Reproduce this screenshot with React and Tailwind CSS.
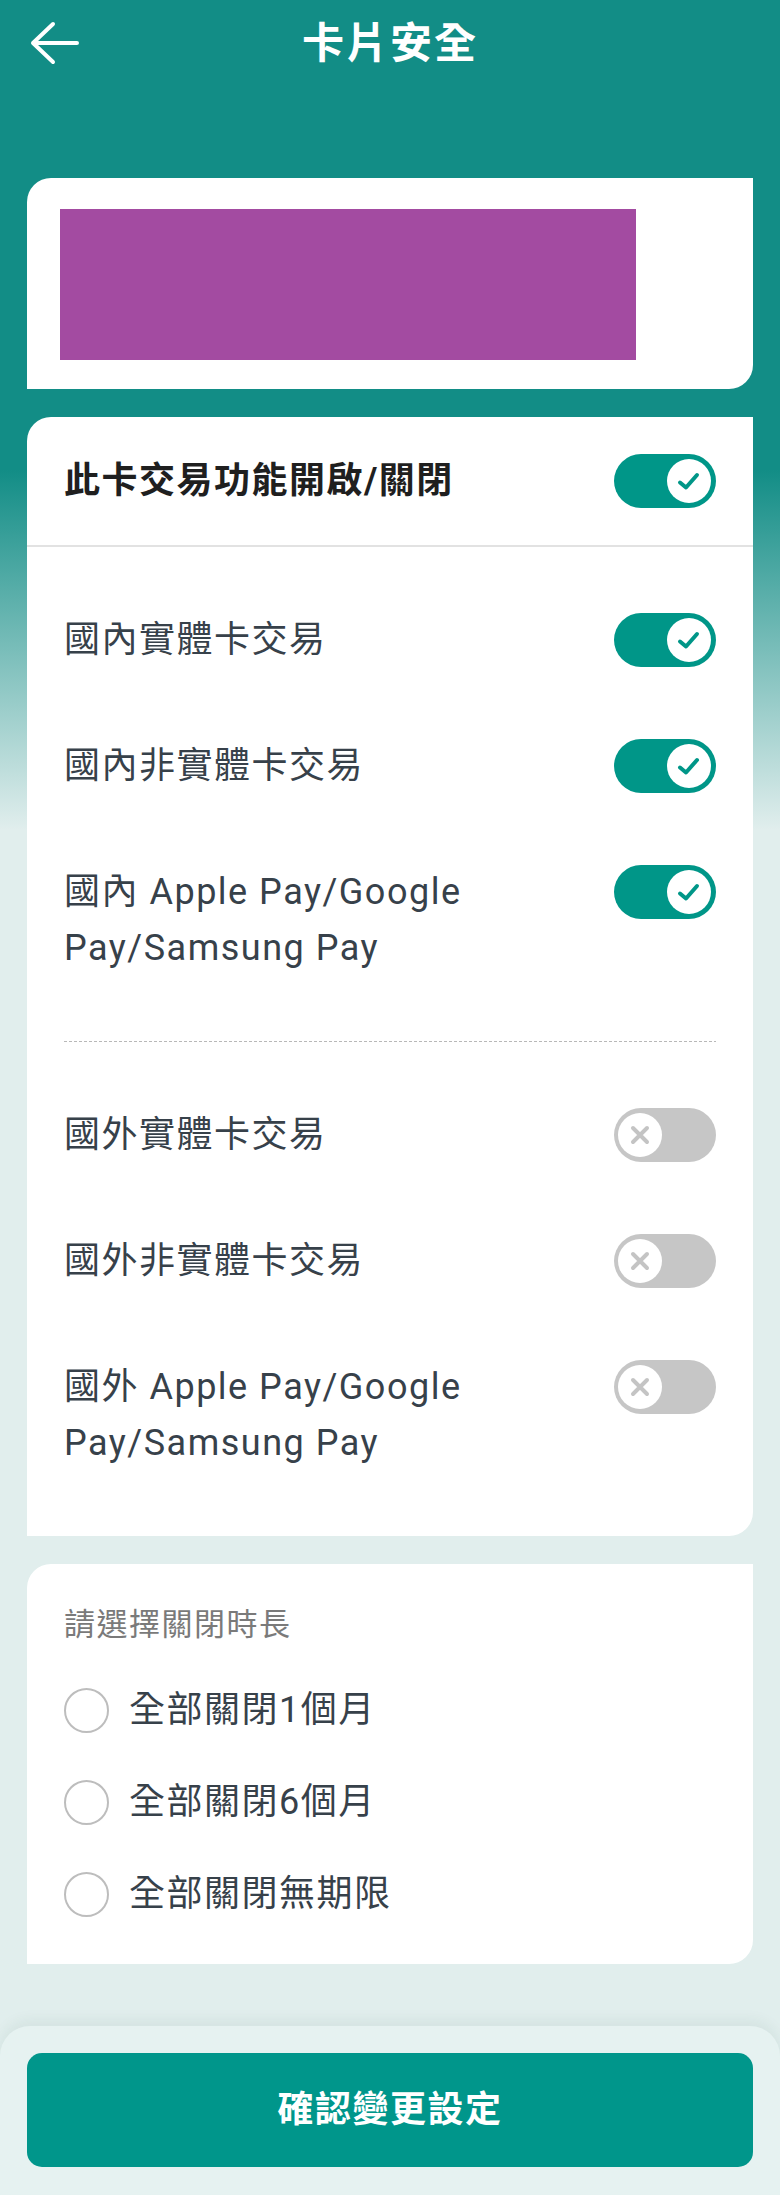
import React, { useState } from "react";

// toggle switch, teal with check when on, gray with cross when off
const Toggle = ({ on, onClick }) => (
  <button
    onClick={onClick}
    className={`shrink-0 w-[102px] h-[54px] rounded-full flex items-center ${
      on ? "bg-[#009688] justify-end pr-[5px]" : "bg-[#c6c6c6] justify-start pl-[4px]"
    }`}
  >
    <span className="w-[44px] h-[44px] rounded-full bg-white flex items-center justify-center">
      {on ? (
        <svg width="24" height="24" viewBox="0 0 24 24" fill="none">
          <path d="M3 13.5L9 18.5L20 6" stroke="#009688" strokeWidth="4" strokeLinecap="round" strokeLinejoin="round" />
        </svg>
      ) : (
        <svg width="22" height="22" viewBox="0 0 22 22" fill="none">
          <path d="M4 4L18 18M18 4L4 18" stroke="#c4c4c4" strokeWidth="4" strokeLinecap="round" />
        </svg>
      )}
    </span>
  </button>
);

const Row = ({ label, on, onClick }) => (
  <div className="flex items-start justify-between gap-4">
    <div className="text-[36px] leading-[56px] tracking-[1.5px] text-[#37414a]">{label}</div>
    <div className="mt-[1px]">
      <Toggle on={on} onClick={onClick} />
    </div>
  </div>
);

const App = () => {
  const [master, setMaster] = useState(true);
  const [flags, setFlags] = useState([true, true, true, false, false, false]);
  const [period, setPeriod] = useState(null);

  const flip = (i) => setFlags(flags.map((f, j) => (j === i ? !f : f)));

  const domestic = [
    "國內實體卡交易",
    "國內非實體卡交易",
    <>國內 Apple Pay/Google<br />Pay/Samsung Pay</>,
  ];
  const foreign = [
    "國外實體卡交易",
    "國外非實體卡交易",
    <>國外 Apple Pay/Google<br />Pay/Samsung Pay</>,
  ];
  const periods = ["全部關閉1個月", "全部關閉6個月", "全部關閉無期限"];

  return (
    <div className="w-[780px] min-h-[2195px] flex flex-col font-['Roboto','Noto_Sans_CJK_TC',sans-serif] bg-[linear-gradient(to_bottom,#128d86_0px,#128d86_470px,#e1eeed_830px,#e1eeed_100%)]">
      {/* header */}
      <header className="h-[86px] grid grid-cols-[1fr_auto_1fr] items-center">
        <div className="pl-[30px] flex items-center">
          <svg width="50" height="44" viewBox="0 0 50 44" fill="none">
            <path d="M23 3L3 22L23 41M3 22H47" stroke="white" strokeWidth="4" strokeLinecap="round" strokeLinejoin="round" />
          </svg>
        </div>
        <h1 className="text-[42px] font-bold tracking-[2px] text-white">卡片安全</h1>
        <div />
      </header>

      {/* card image */}
      <section className="mt-[92px] mx-[27px] h-[211px] bg-white rounded-tl-[24px] rounded-br-[24px] pt-[31px] pl-[33px]">
        <div className="w-[576px] h-[151px] bg-[#a34ba1]" />
      </section>

      {/* transaction switches */}
      <section className="mt-[28px] mx-[27px] bg-white rounded-tl-[24px] rounded-br-[24px]">
        <div className="h-[130px] border-b-2 border-[#e2e2e2] px-[37px] flex items-center justify-between">
          <div className="text-[36px] font-bold tracking-[1.5px] text-[#1f1f1f]">此卡交易功能開啟/關閉</div>
          <Toggle on={master} onClick={() => setMaster(!master)} />
        </div>
        <div className="px-[37px] py-[65px] flex flex-col gap-[70px]">
          {domestic.map((label, i) => (
            <Row key={i} label={label} on={flags[i]} onClick={() => flip(i)} />
          ))}
        </div>
        <div className="mx-[37px] h-px bg-[repeating-linear-gradient(to_right,#b8b8b8_0px,#b8b8b8_3px,transparent_3px,transparent_5px)]" />
        <div className="px-[37px] py-[65px] flex flex-col gap-[70px]">
          {foreign.map((label, i) => (
            <Row key={i} label={label} on={flags[i + 3]} onClick={() => flip(i + 3)} />
          ))}
        </div>
      </section>

      {/* close period */}
      <section className="mt-[28px] mx-[27px] bg-white rounded-tl-[24px] rounded-br-[24px] px-[37px] pt-[41px] pb-[47px]">
        <div className="text-[31px] leading-[40px] tracking-[1.5px] text-[#7a7a7a]">請選擇關閉時長</div>
        <div className="mt-[42px] flex flex-col gap-[46px]">
          {periods.map((p, i) => (
            <button key={i} onClick={() => setPeriod(i)} className="h-[46px] flex items-center gap-[20px] text-left">
              <span className="w-[45px] h-[45px] rounded-full border-2 border-[#bdbdbd] flex items-center justify-center">
                {period === i && <span className="w-[25px] h-[25px] rounded-full bg-[#009688]" />}
              </span>
              <span className="text-[36px] tracking-[1.5px] text-[#37414a]">{p}</span>
            </button>
          ))}
        </div>
      </section>

      {/* bottom action */}
      <footer className="mt-[62px] rounded-t-[30px] bg-[#e6f2f1] shadow-[0_-6px_14px_rgba(0,60,55,0.06)] px-[27px] pt-[27px] pb-[28px]">
        <button className="w-full h-[114px] rounded-[15px] bg-[#00968b] text-white text-[36px] font-bold tracking-[1.5px]">
          確認變更設定
        </button>
      </footer>
    </div>
  );
};

export default App;
